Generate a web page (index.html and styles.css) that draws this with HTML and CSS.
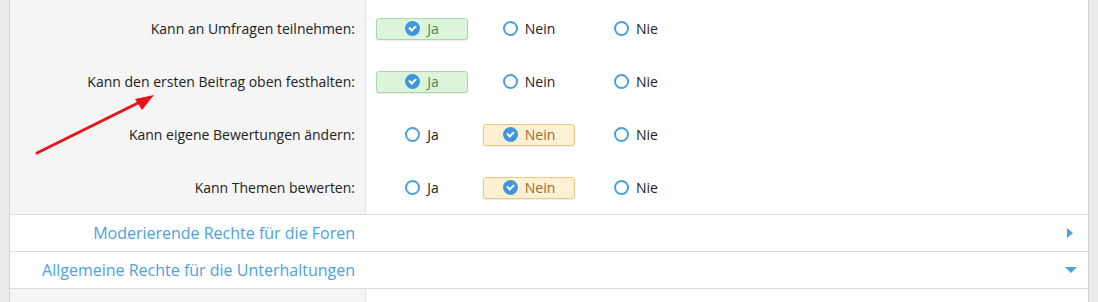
FILE: index.html
```html
<!DOCTYPE html>
<html lang="de">
<head>
    <meta charset="UTF-8">
    <meta name="viewport" content="width=device-width, initial-scale=1.0">
    <title>Benutzergruppen-Rechte</title>
    <link rel="stylesheet" href="styles.css">
</head>
<body>
    <div class="panel">
        <div class="rows first">
            <div class="row">
                <div class="label">Kann an Umfragen teilnehmen:</div>
                <div class="options">
                    <span class="opt yes checked"><i class="mark"></i>Ja</span>
                    <span class="opt"><i class="mark"></i>Nein</span>
                    <span class="opt"><i class="mark"></i>Nie</span>
                </div>
            </div>
            <div class="row">
                <div class="label">Kann den ersten Beitrag oben festhalten:</div>
                <div class="options">
                    <span class="opt yes checked"><i class="mark"></i>Ja</span>
                    <span class="opt"><i class="mark"></i>Nein</span>
                    <span class="opt"><i class="mark"></i>Nie</span>
                </div>
            </div>
            <div class="row">
                <div class="label">Kann eigene Bewertungen ändern:</div>
                <div class="options">
                    <span class="opt"><i class="mark"></i>Ja</span>
                    <span class="opt no checked"><i class="mark"></i>Nein</span>
                    <span class="opt"><i class="mark"></i>Nie</span>
                </div>
            </div>
            <div class="row">
                <div class="label">Kann Themen bewerten:</div>
                <div class="options">
                    <span class="opt"><i class="mark"></i>Ja</span>
                    <span class="opt no checked"><i class="mark"></i>Nein</span>
                    <span class="opt"><i class="mark"></i>Nie</span>
                </div>
            </div>
        </div>

        <div class="section-head">
            <span class="title">Moderierende Rechte für die Foren</span>
            <span class="caret caret-right"></span>
        </div>
        <div class="section-head">
            <span class="title">Allgemeine Rechte für die Unterhaltungen</span>
            <span class="caret caret-down"></span>
        </div>

        <div class="rows">
            <div class="row">
                <div class="label"></div>
                <div class="options"></div>
            </div>
        </div>
    </div>

    <!-- Annotation arrow drawn over the form -->
    <svg class="annotation" width="1098" height="302" viewBox="0 0 1098 302">
        <line x1="37" y1="153" x2="140" y2="102" stroke="#e5141c" stroke-width="3" stroke-linecap="round"/>
        <polygon points="154,95 135,99 142,110" fill="#e5141c"/>
    </svg>
</body>
</html>
```

FILE: styles.css
```css
body {
    margin: 0;
    padding: 0;
    background-color: #ececec;
    font-family: "Open Sans", "Noto Sans", Arial, sans-serif;
    font-size: 14px;
    color: #222;
}
.panel {
    margin: 0 9px;
    background-color: #fff;
    border-left: 1px solid #d5d5d5;
    border-right: 1px solid #d5d5d5;
    height: 302px;
    overflow: hidden;
}
.rows.first {
    padding-top: 2px;
    background: linear-gradient(to right, #f5f5f5 355px, #e3e3e3 355px, #e3e3e3 356px, #fff 356px);
}
.row {
    display: flex;
    height: 53px;
}
.label {
    width: 345px;
    padding-right: 10px;
    background-color: #f5f5f5;
    border-right: 1px solid #e3e3e3;
    display: flex;
    align-items: center;
    justify-content: flex-end;
}
.options {
    display: flex;
    align-items: center;
    gap: 15px;
    padding-left: 10px;
}
.opt {
    box-sizing: border-box;
    width: 92px;
    height: 22px;
    display: flex;
    align-items: center;
    justify-content: center;
    gap: 7px;
    border: 1px solid transparent;
    border-radius: 3px;
}
.mark {
    box-sizing: border-box;
    width: 15px;
    height: 15px;
    border: 2px solid #4a9fdf;
    border-radius: 50%;
    position: relative;
}
.opt.checked .mark {
    background-color: #3f97dc;
    border-color: #3f97dc;
}
.opt.checked .mark::after {
    content: "";
    position: absolute;
    left: 2px;
    top: 1.5px;
    width: 5px;
    height: 3px;
    border-left: 2.5px solid #fff;
    border-bottom: 2.5px solid #fff;
    transform: rotate(-45deg);
}
.opt.yes {
    background-color: #dcf4dc;
    border-color: #a6d9a6;
    color: #4f8a4f;
    box-shadow: 0 1px 1px rgba(0,0,0,0.08);
}
.opt.no {
    background-color: #fdf0d3;
    border-color: #edc885;
    color: #9a6c2c;
    box-shadow: 0 1px 1px rgba(0,0,0,0.08);
}
.section-head {
    display: flex;
    align-items: center;
    height: 36px;
    border-top: 1px solid #dcdcdc;
    background-color: #fff;
}
.section-head .title {
    width: 345px;
    padding-right: 10px;
    text-align: right;
    color: #4aa3df;
    font-size: 16px;
}
.caret {
    margin-left: auto;
    width: 0;
    height: 0;
}
.caret-right {
    margin-right: 15px;
    border-top: 5px solid transparent;
    border-bottom: 5px solid transparent;
    border-left: 6px solid #4aa3df;
}
.caret-down {
    margin-right: 11px;
    border-left: 6px solid transparent;
    border-right: 6px solid transparent;
    border-top: 6px solid #4aa3df;
}
.section-head + .rows {
    border-top: 1px solid #dcdcdc;
}
.annotation {
    position: absolute;
    left: 0;
    top: 0;
    pointer-events: none;
}
```
